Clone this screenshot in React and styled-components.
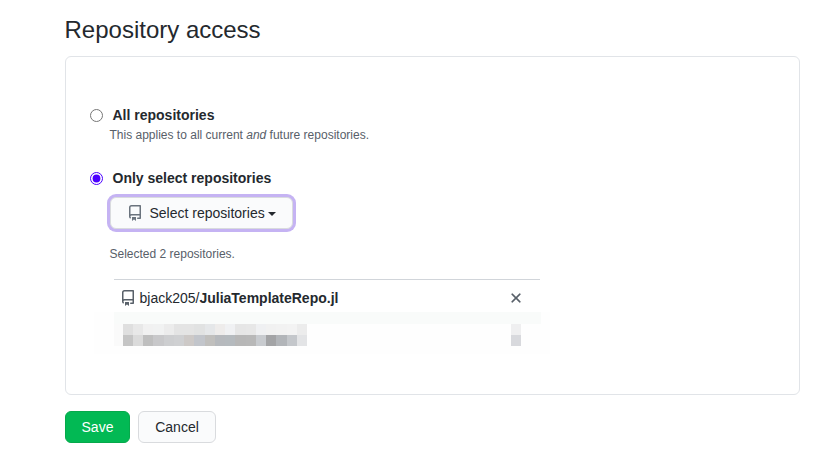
import React, { useState } from "react";
import styled, { createGlobalStyle } from "styled-components";

const GlobalStyle = createGlobalStyle`
  * { box-sizing: border-box; }
  body {
    margin: 0;
    background: #fff;
    color: #24292e;
    font: 14px/21px "Liberation Sans", Arial, sans-serif;
  }
`;

const Page = styled.main`
  width: 826px;
  height: 467px;
  padding: 12px 26.5px 0 64.5px;
  overflow: hidden;
`;

const Title = styled.h2`
  margin: 0 0 8px;
  font-size: 24px;
  font-weight: 400;
  line-height: 36px;
`;

const Panel = styled.section`
  height: 339px;
  padding: 48px 24px 0;
  border: 1px solid #e1e4e8;
  border-radius: 6px;
`;

const Choice = styled.label`
  display: flex;
  align-items: center;
  gap: 10px;
  height: 21px;
  font-weight: 600;
`;

const Radio = styled.input`
  width: 13px;
  height: 13px;
  margin: 0 0 1px;
  accent-color: #4b00ff;
`;

const Note = styled.p`
  margin: ${(p) => p.$margin};
  padding-left: 20px;
  color: #586069;
  font-size: 12px;
  line-height: 18px;
`;

const Button = styled.button`
  display: flex;
  align-items: center;
  justify-content: center;
  height: 32px;
  width: ${(p) => p.$width}px;
  padding: 0;
  border: 1px solid ${(p) => (p.$primary ? "#06a94b" : "#d9dbde")};
  border-radius: 6px;
  background: ${(p) => (p.$primary ? "#02b954" : "#fafbfc")};
  color: ${(p) => (p.$primary ? "#fff" : "#24292e")};
  font: 14px/20px "Liberation Sans", Arial, sans-serif;
`;

const SelectButton = styled(Button)`
  justify-content: flex-start;
  margin: 8px 0 0 20px;
  padding-left: 16px;
  box-shadow: 0 0 0 3px #c5b3f3;
  outline: none;

  svg {
    margin-right: 7px;
    fill: #6a737d;
  }
`;

const Caret = styled.span`
  margin: 2px 0 0 3.5px;
  border: 4px solid transparent;
  border-top-color: currentColor;
  border-bottom: 0;
`;

const Icon = styled.svg`
  display: block;
  flex: none;
  width: 16px;
  height: 16px;
  fill: #586069;
`;

const RepoList = styled.div`
  width: 456px;
  margin: 16px 0 0 4.5px;
`;

const RepoRow = styled.div`
  display: flex;
  align-items: center;
  width: 426px;
  height: 33px;
  margin-left: 20px;
  padding: 4px 16px 0 6px;
  border-top: 1px solid #d1d5da;
`;

const RepoName = styled.span`
  flex: 1;
  margin-left: 3.5px;
`;

const Redacted = styled.div`
  height: 42px;
  padding: 0 9px 0 20px;
  background: #fefefe;
`;

const RedactedTop = styled.div`
  height: 12px;
  background: #f9fbfa;
`;

const RedactedBody = styled.div`
  display: flex;
  align-items: flex-start;
  gap: 204px;
  height: 22px;
  padding-left: 8.5px;
  background: linear-gradient(90deg, #fafafa 9px, transparent 9px);
`;

const Mosaic = styled.div`
  display: grid;
  grid-template-columns: repeat(${(p) => p.$columns}, 10.25px);
  grid-template-rows: 11px 11px;
`;

const Tile = styled.span`
  background: ${(p) => p.$tone};
`;

const Actions = styled.div`
  display: flex;
  gap: 8px;
  margin: 16px 0 0 0.5px;
`;

const nameTones = [
  "#dfdfdf", "#e8e8e8", "#f1f1f1", "#f1f2f2", "#ececec", "#e4e4e4",
  "#e4e4e4", "#e1e2e2", "#e5e7e9", "#eeeceb", "#f0f1f3", "#e6e6e6",
  "#e7e7e7", "#eff0f2", "#f1f1f1", "#f2f2f2", "#f3f3f3", "#ececec",
  "#c5c5c5", "#dbdbdb", "#bfbfbf", "#c8c8ca", "#cdced0", "#cfd0d2",
  "#cdc9c7", "#c2c5cb", "#c0bfbd", "#b6b9bd", "#b5babe", "#b7b7b7",
  "#b8b8b8", "#c8cbcf", "#a3a4a6", "#b2b5b9", "#c4c7cb", "#e3e4e6",
];

const closeTones = ["#efeff0", "#d8d9dd"];

function RepoIcon() {
  return (
    <Icon viewBox="0 0 16 16" aria-hidden="true">
      <path fillRule="evenodd" d="M2 2.5A2.5 2.5 0 014.5 0h8.75a.75.75 0 01.75.75v12.5a.75.75 0 01-.75.75h-2.5a.75.75 0 110-1.5h1.75v-2h-8a1 1 0 00-.714 1.7.75.75 0 01-1.072 1.05A2.495 2.495 0 012 11.5v-9zm10.5-1V9h-8c-.356 0-.694.074-1 .208V2.5a1 1 0 011-1h8zM5 12.25v3.25a.25.25 0 00.4.2l1.45-1.087a.25.25 0 01.3 0L8.6 15.7a.25.25 0 00.4-.2v-3.25a.25.25 0 00-.25-.25h-3.5a.25.25 0 00-.25.25z" />
    </Icon>
  );
}

function CloseIcon() {
  return (
    <Icon viewBox="0 0 16 16" aria-hidden="true">
      <path fillRule="evenodd" d="M3.72 3.72a.75.75 0 011.06 0L8 6.94l3.22-3.22a.75.75 0 111.06 1.06L9.06 8l3.22 3.22a.75.75 0 11-1.06 1.06L8 9.06l-3.22 3.22a.75.75 0 01-1.06-1.06L6.94 8 3.72 4.78a.75.75 0 010-1.06z" stroke="#586069" strokeWidth="0.3" />
    </Icon>
  );
}

function PixelBlock({ columns, tones }) {
  return (
    <Mosaic $columns={columns}>
      {tones.map((tone, i) => <Tile key={i} $tone={tone} />)}
    </Mosaic>
  );
}

export default function App() {
  const [access, setAccess] = useState("selected");

  return (
    <>
      <GlobalStyle />
      <Page>
        <Title>Repository access</Title>
        <Panel>
          <Choice>
            <Radio type="radio" name="access" checked={access === "all"} onChange={() => setAccess("all")} />
            All repositories
          </Choice>
          <Note $margin="0 0 24px">
            This applies to all current <em>and</em> future repositories.
          </Note>
          <Choice>
            <Radio type="radio" name="access" checked={access === "selected"} onChange={() => setAccess("selected")} />
            Only select repositories
          </Choice>
          <SelectButton type="button" $width={183}>
            <RepoIcon />
            Select repositories
            <Caret />
          </SelectButton>
          <Note $margin="16px 0 0">Selected 2 repositories.</Note>
          <RepoList>
            <RepoRow>
              <RepoIcon />
              <RepoName>bjack205/<b>JuliaTemplateRepo.jl</b></RepoName>
              <CloseIcon />
            </RepoRow>
            <Redacted>
              <RedactedTop />
              <RedactedBody>
                <PixelBlock columns={18} tones={nameTones} />
                <PixelBlock columns={1} tones={closeTones} />
              </RedactedBody>
            </Redacted>
          </RepoList>
        </Panel>
        <Actions>
          <Button type="button" $primary $width={65}>Save</Button>
          <Button type="button" $width={78}>Cancel</Button>
        </Actions>
      </Page>
    </>
  );
}
